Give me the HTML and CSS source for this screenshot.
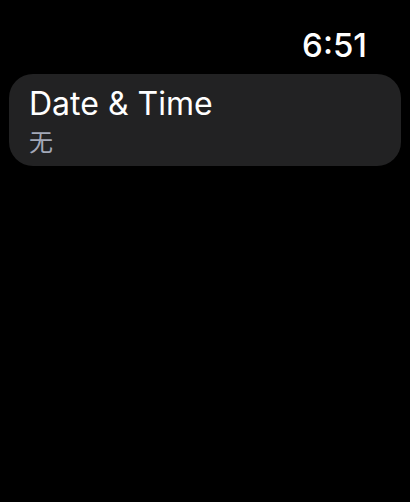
FILE: index.html
```html
<!DOCTYPE html>
<html lang="en">
<head>
<meta charset="utf-8">
<meta name="viewport" content="width=device-width, initial-scale=1">
<title>Date &amp; Time</title>
<link rel="stylesheet" href="styles.css">
</head>
<body>
<header class="status-bar"><time class="clock">6:51</time></header>
<main class="list">
<button class="row" type="button">
<span class="row-title">Date &amp; Time</span>
<span class="row-value" lang="zh-Hans">无</span>
</button>
</main>
</body>
</html>
```
FILE: styles.css
```css
* {
  box-sizing: border-box;
}

body {
  margin: 0;
  min-height: 100vh;
  background: #000;
  color: #fff;
  font-family: Inter, "Noto Sans CJK SC", sans-serif;
}

.status-bar {
  display: flex;
  justify-content: flex-end;
  padding: 25px 43px 9px 9px;
}

.clock {
  font-size: 33px;
  line-height: 40px;
  font-weight: 500;
}

.list {
  padding: 0 9px;
}

.row {
  display: flex;
  flex-direction: column;
  align-items: flex-start;
  width: 100%;
  padding: 10px 20px 8px;
  border: 0;
  border-radius: 24px;
  background: #222223;
  color: inherit;
  font-family: inherit;
  text-align: left;
}

.row-title {
  font-size: 32px;
  line-height: 40px;
}

.row-value {
  color: #a2a8b8;
  font-size: 24px;
  line-height: 34px;
  font-family: "Noto Sans CJK SC", sans-serif;
}
```
